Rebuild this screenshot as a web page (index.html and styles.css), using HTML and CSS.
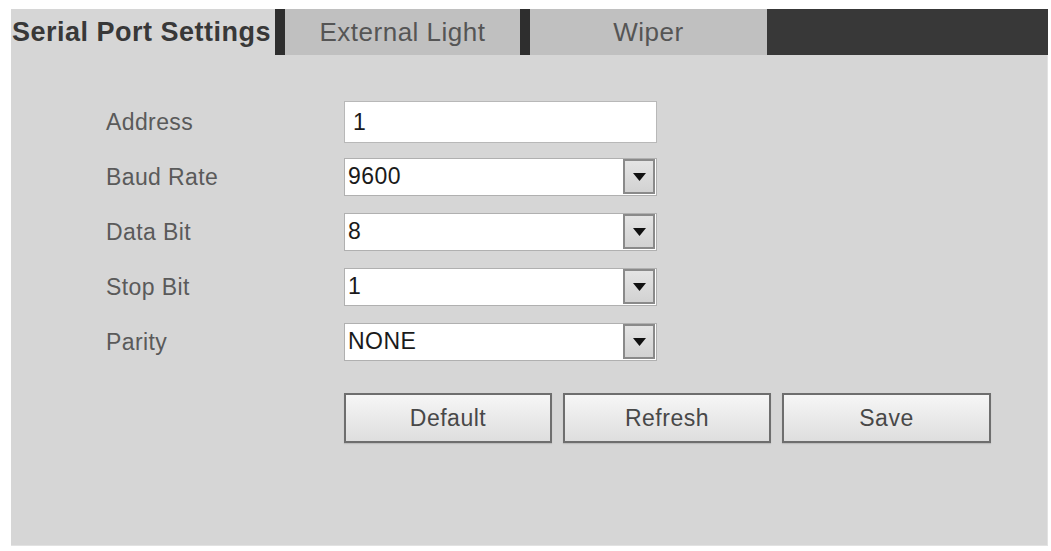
FILE: index.html
```html
<!DOCTYPE html>
<html>
<head>
<meta charset="utf-8">
<title>Serial Port Settings</title>
<link rel="stylesheet" href="styles.css">
</head>
<body>
<div class="panel">
  <div class="tabs">
    <div class="tab tab-active">Serial Port Settings</div>
    <div class="tab-sep"></div>
    <div class="tab tab-light">External Light</div>
    <div class="tab-sep"></div>
    <div class="tab tab-wiper">Wiper</div>
    <div class="tab-fill"></div>
  </div>
  <div class="form">
    <div class="row row-first">
      <div class="label">Address</div>
      <input class="text-input" type="text" value="1">
    </div>
    <div class="row">
      <div class="label">Baud Rate</div>
      <div class="select"><span class="select-value">9600</span><span class="select-arrow"><svg width="13" height="8" viewBox="0 0 13 8"><polygon points="0,0 13,0 6.5,8" fill="#111"/></svg></span></div>
    </div>
    <div class="row">
      <div class="label">Data Bit</div>
      <div class="select"><span class="select-value">8</span><span class="select-arrow"><svg width="13" height="8" viewBox="0 0 13 8"><polygon points="0,0 13,0 6.5,8" fill="#111"/></svg></span></div>
    </div>
    <div class="row">
      <div class="label">Stop Bit</div>
      <div class="select"><span class="select-value">1</span><span class="select-arrow"><svg width="13" height="8" viewBox="0 0 13 8"><polygon points="0,0 13,0 6.5,8" fill="#111"/></svg></span></div>
    </div>
    <div class="row">
      <div class="label">Parity</div>
      <div class="select"><span class="select-value">NONE</span><span class="select-arrow"><svg width="13" height="8" viewBox="0 0 13 8"><polygon points="0,0 13,0 6.5,8" fill="#111"/></svg></span></div>
    </div>
    <div class="buttons">
      <button class="btn btn-default">Default</button>
      <button class="btn btn-refresh">Refresh</button>
      <button class="btn btn-save">Save</button>
    </div>
  </div>
</div>
</body>
</html>
```

FILE: styles.css
```css
html, body {
  margin: 0;
  padding: 0;
  background: #ffffff;
}

body {
  font-family: "Liberation Sans", Arial, sans-serif;
  padding: 9px 3px 5px 11px;
}

.panel {
  height: 537px;
  background: #d6d6d6;
  box-shadow: inset -1px -1px 0 #e2e2e2;
}

.tabs {
  display: flex;
  height: 46px;
}

.tab {
  display: flex;
  align-items: center;
  justify-content: center;
  font-size: 26px;
  letter-spacing: 0.5px;
  color: #555555;
  background: #c0c0c0;
}

.tab-active {
  width: 264px;
  justify-content: flex-start;
  padding-left: 1px;
  box-sizing: border-box;
  background: #d6d6d6;
  color: #383838;
  font-weight: bold;
  font-size: 27px;
  letter-spacing: 0.5px;
  white-space: nowrap;
  overflow: hidden;
}

.tab-light {
  width: 235px;
}

.tab-wiper {
  width: 237px;
}

.tab-sep {
  width: 10px;
  background: #2e2e2e;
}

.tab-fill {
  flex: 1;
  background: #383838;
}

.form {
  padding: 46px 0 0 95px;
  display: flex;
  flex-direction: column;
  gap: 17px;
}

.row {
  display: flex;
  align-items: center;
  height: 38px;
}

.row-first {
  height: 42px;
  margin-bottom: -2px;
}

.label {
  width: 238px;
  font-size: 23px;
  letter-spacing: 0.4px;
  color: #5a5a5a;
}

.text-input {
  box-sizing: border-box;
  width: 313px;
  height: 42px;
  margin: 0;
  padding: 0 0 0 8px;
  border: 1px solid #b8b8b8;
  background: #ffffff;
  font-family: "Liberation Sans", Arial, sans-serif;
  font-size: 23px;
  letter-spacing: 0.5px;
  color: #1a1a1a;
  outline: none;
}

.select {
  box-sizing: border-box;
  width: 313px;
  height: 38px;
  display: flex;
  align-items: stretch;
  border: 1px solid #b0b0b0;
  background: #ffffff;
  padding: 0 1px 1px 0;
}

.select-value {
  flex: 1;
  display: flex;
  align-items: center;
  padding-left: 3px;
  font-size: 23px;
  letter-spacing: 0.5px;
  color: #1a1a1a;
}

.select-arrow {
  box-sizing: border-box;
  width: 32px;
  display: flex;
  align-items: center;
  justify-content: center;
  border: 2px solid #8a8a8a;
  background: linear-gradient(#e4e4e4, #d2d2d2);
}

.buttons {
  display: flex;
  gap: 11px;
  margin-top: 15px;
  padding-left: 238px;
}

.btn {
  box-sizing: border-box;
  width: 208px;
  height: 50px;
  margin: 0;
  padding: 0;
  border: 2px solid #6e6e6e;
  background: linear-gradient(#f6f6f6, #dedede);
  box-shadow: 0 1px 1px #bdbdbd;
  font-family: "Liberation Sans", Arial, sans-serif;
  font-size: 23px;
  letter-spacing: 0.5px;
  color: #484848;
}

.btn-save {
  width: 209px;
}
```
